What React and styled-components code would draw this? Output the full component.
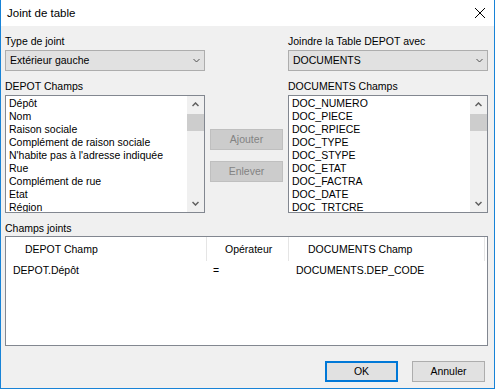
import React from "react";
import styled, { createGlobalStyle } from "styled-components";

const Global = createGlobalStyle`
  html, body { margin: 0; padding: 0; background: #f0f0f0; }
  * { box-sizing: border-box; }
`;

const Window = styled.div`
  width: 495px;
  height: 389px;
  background: #f0f0f0;
  border: 1px solid #1883d7;
  border-top: none;
  display: flex;
  flex-direction: column;
  font-family: "Liberation Sans", Arial, sans-serif;
  font-size: 10.5px;
  color: #000;
  overflow: hidden;
`;

const TitleBar = styled.div`
  height: 26px;
  flex: none;
  background: #fff;
  display: flex;
  align-items: center;
  justify-content: space-between;
  padding: 0 9px 0 6px;
`;

const Title = styled.div`
  font-size: 11.5px;
  line-height: 16px;
  padding-bottom: 1px;
`;

const CloseBtn = styled.div`
  width: 10px;
  height: 10px;
  display: flex;
  margin-bottom: 1px;
`;

const Body = styled.div`
  flex: 1;
  padding: 9px 6px 0 4px;
  display: flex;
  flex-direction: column;
`;

const Row = styled.div`
  display: grid;
  grid-template-columns: 200px 83px 200px;
  margin-top: ${(p) => p.$mt || 0}px;
`;

const Field = styled.div`
  display: flex;
  flex-direction: column;
  gap: ${(p) => p.$gap ?? 2}px;
  grid-column: ${(p) => p.$col};
`;

const Label = styled.div`
  line-height: 13px;
  height: 13px;
  white-space: nowrap;
`;

const Combo = styled.div`
  height: 21px;
  background: #e1e1e1;
  border: 1px solid #adadad;
  display: flex;
  align-items: center;
  justify-content: space-between;
  padding: 0 4px 0 4px;
  line-height: 13px;
`;

const ListBox = styled.div`
  height: 118px;
  background: #fff;
  border: 1px solid #828790;
  display: flex;
  overflow: hidden;
`;

const Items = styled.div`
  flex: 1;
  padding: 1px 0 0 3px;
  overflow: hidden;
`;

const Item = styled.div`
  line-height: 13px;
  height: 13px;
  white-space: nowrap;
`;

const ScrollBar = styled.div`
  width: 17px;
  flex: none;
  background: #f0f0f0;
  display: flex;
  flex-direction: column;
`;

const ScrollBtn = styled.div`
  width: 17px;
  height: 17px;
  display: flex;
  align-items: center;
  justify-content: center;
`;

const Thumb = styled.div`
  width: 17px;
  height: 17px;
  margin-top: 1px;
  background: #cdcdcd;
`;

const ScrollSpace = styled.div`
  flex: 1;
`;

const ButtonCol = styled.div`
  grid-column: 2;
  display: flex;
  flex-direction: column;
  gap: 11px;
  padding: 49px 0 0 5px;
`;

const Button = styled.div`
  width: 73px;
  height: 21px;
  display: flex;
  align-items: center;
  justify-content: center;
  background: ${(p) => (p.$disabled ? "#cccccc" : "#e1e1e1")};
  color: ${(p) => (p.$disabled ? "#838383" : "#000")};
  border: ${(p) =>
    p.$default ? "2px solid #0078d7" : p.$disabled ? "1px solid #bfbfbf" : "1px solid #adadad"};
  line-height: 13px;
`;

const Section = styled.div`
  margin-top: 9px;
  display: flex;
  flex-direction: column;
  gap: 1px;
`;

const Grid = styled.div`
  height: 110px;
  background: #fff;
  border: 1px solid #828790;
  display: flex;
  flex-direction: column;
`;

const GridRow = styled.div`
  display: grid;
  grid-template-columns: 201px 82px 196px;
  height: ${(p) => p.$h}px;
  align-items: center;
`;

const HeadCell = styled.div`
  height: 100%;
  display: flex;
  align-items: center;
  padding-left: ${(p) => p.$pl}px;
  border-right: 1px solid #e5e5e5;
  white-space: nowrap;
  padding-bottom: 1px;
`;

const Cell = styled.div`
  padding-left: ${(p) => p.$pl}px;
  white-space: nowrap;
  line-height: 13px;
`;

const Footer = styled.div`
  margin-top: 15px;
  display: flex;
  justify-content: flex-end;
  gap: 14px;
  padding-right: 3px;
`;

const Chevron = ({ up, color = "#606060", w = 7 }) => (
  <svg width={w} height="5" viewBox="0 0 7 5">
    <polyline
      points={up ? "0.5,4 3.5,1 6.5,4" : "0.5,1 3.5,4 6.5,1"}
      fill="none"
      stroke={color}
      strokeWidth={up !== undefined ? 1.5 : 1}
    />
  </svg>
);

const Scroll = () => (
  <ScrollBar>
    <ScrollBtn>
      <Chevron up={true} />
    </ScrollBtn>
    <Thumb />
    <ScrollSpace />
    <ScrollBtn>
      <Chevron up={false} />
    </ScrollBtn>
  </ScrollBar>
);

const depotFields = [
  "Dépôt",
  "Nom",
  "Raison sociale",
  "Complément de raison sociale",
  "N'habite pas à l'adresse indiquée",
  "Rue",
  "Complément de rue",
  "Etat",
  "Région",
];

const docFields = [
  "DOC_NUMERO",
  "DOC_PIECE",
  "DOC_RPIECE",
  "DOC_TYPE",
  "DOC_STYPE",
  "DOC_ETAT",
  "DOC_FACTRA",
  "DOC_DATE",
  "DOC_TRTCRE",
];

export default function App() {
  return (
    <>
      <Global />
      <Window>
        <TitleBar>
          <Title>Joint de table</Title>
          <CloseBtn>
            <svg width="10" height="10" viewBox="0 0 10 10">
              <line x1="0" y1="0" x2="10" y2="10" stroke="#000" strokeWidth="1" />
              <line x1="10" y1="0" x2="0" y2="10" stroke="#000" strokeWidth="1" />
            </svg>
          </CloseBtn>
        </TitleBar>
        <Body>
          <Row>
            <Field $col={1}>
              <Label>Type de joint</Label>
              <Combo>
                <span>Extérieur gauche</span>
                <Chevron color="#505050" />
              </Combo>
            </Field>
            <Field $col={3}>
              <Label>Joindre la Table DEPOT avec</Label>
              <Combo>
                <span>DOCUMENTS</span>
                <Chevron color="#505050" />
              </Combo>
            </Field>
          </Row>
          <Row $mt={9}>
            <Field $col={1}>
              <Label>DEPOT Champs</Label>
              <ListBox>
                <Items>
                  {depotFields.map((f) => (
                    <Item key={f}>{f}</Item>
                  ))}
                </Items>
                <Scroll />
              </ListBox>
            </Field>
            <ButtonCol>
              <Button $disabled>Ajouter</Button>
              <Button $disabled>Enlever</Button>
            </ButtonCol>
            <Field $col={3}>
              <Label>DOCUMENTS Champs</Label>
              <ListBox>
                <Items>
                  {docFields.map((f) => (
                    <Item key={f}>{f}</Item>
                  ))}
                </Items>
                <Scroll />
              </ListBox>
            </Field>
          </Row>
          <Section>
            <Label>Champs joints</Label>
            <Grid>
              <GridRow $h={24}>
                <HeadCell $pl={19}>DEPOT Champ</HeadCell>
                <HeadCell $pl={18}>Opérateur</HeadCell>
                <HeadCell $pl={19}>DOCUMENTS Champ</HeadCell>
              </GridRow>
              <GridRow $h={19}>
                <Cell $pl={7}>DEPOT.Dépôt</Cell>
                <Cell $pl={6}>=</Cell>
                <Cell $pl={7}>DOCUMENTS.DEP_CODE</Cell>
              </GridRow>
            </Grid>
          </Section>
          <Footer>
            <Button $default>OK</Button>
            <Button>Annuler</Button>
          </Footer>
        </Body>
      </Window>
    </>
  );
}
